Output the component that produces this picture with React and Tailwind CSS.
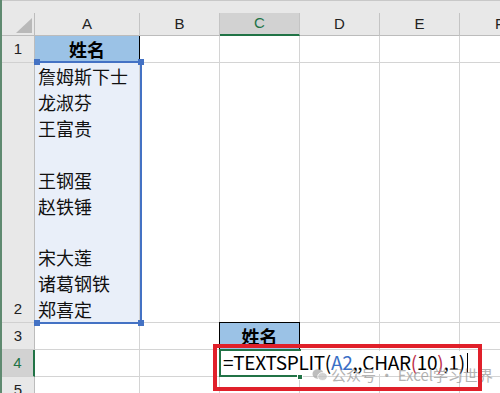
import React from 'react';

const cjk = { fontFamily: '"Noto Sans CJK SC", "Noto Sans", sans-serif' };
const hdr = { fontFamily: '"Liberation Sans", "Noto Sans", sans-serif' };

const names = ['詹姆斯下士', '龙淑芬', '王富贵', '', '王钢蛋', '赵铁锤', '', '宋大莲', '诸葛钢铁', '郑喜定'];

const RowHead = ({ num, active }) => (
    <div
        className={`w-[33px] shrink-0 flex items-end justify-center border-b border-[#d0d0d0] ${active ? 'bg-[#d2d2d2] text-[#217346] border-r-2 border-r-[#217346]' : 'bg-[#e8e8e8] text-[#222] border-r border-r-[#bcbcbc]'}`}
        style={hdr}
    >
        <span className="h-[26px] leading-[26px] text-[15px]">{num}</span>
    </div>
);

const ColHead = ({ label, w, active }) => (
    <div
        className={`${w} shrink-0 flex items-center justify-center text-[15px] border-r border-[#c4c4c4] ${active ? 'bg-[#d2d2d2] text-[#217346] border-b-2 border-b-[#217346]' : 'bg-[#e8e8e8] text-[#222] border-b border-b-[#bcbcbc]'}`}
        style={hdr}
    >
        {label}
    </div>
);

const Cell = ({ w, className = '', children }) => (
    <div className={`${w} shrink-0 border-r border-b border-[#d4d4d4] ${className}`}>{children}</div>
);

const Header = ({ children }) => (
    <div className="w-full h-full flex items-center justify-center bg-[#9bc2e6] text-[18px] font-bold text-black" style={cjk}>
        {children}
    </div>
);

export default function App() {
    return (
        <div className="relative w-[500px] h-[393px] overflow-hidden bg-white border-l-2 border-[#5f8a70]">
            {/* strip above headers */}
            <div className="h-[13px] bg-[#e8e8e8] border-t border-[#c8c8c8]" />

            {/* column headers */}
            <div className="flex h-[23px]">
                <div className="w-[33px] shrink-0 bg-[#e8e8e8] border-r border-b border-[#bcbcbc] relative">
                    <svg className="absolute left-[14px] top-[5px]" width="16" height="15" viewBox="0 0 16 15">
                        <polygon points="16,0 16,15 0,15" fill="#b9b9b9" />
                    </svg>
                </div>
                <ColHead label="A" w="w-[105px]" />
                <ColHead label="B" w="w-[80px]" />
                <ColHead label="C" w="w-[80px]" active />
                <ColHead label="D" w="w-[80px]" />
                <ColHead label="E" w="w-[80px]" />
                <ColHead label="F" w="w-[80px]" />
            </div>

            {/* row 1 */}
            <div className="flex h-[27px]">
                <RowHead num="1" />
                <Cell w="w-[105px]" className="border-r-black">
                    <Header>姓名</Header>
                </Cell>
                <Cell w="w-[80px]" />
                <Cell w="w-[80px]" />
                <Cell w="w-[80px]" />
                <Cell w="w-[80px]" />
                <Cell w="w-[80px]" />
            </div>

            {/* row 2 */}
            <div className="flex h-[260px]">
                <RowHead num="2" />
                <Cell w="w-[105px]" className="bg-[#e9eff9] flex flex-col justify-end pl-[3px]">
                    {names.map((n, i) => (
                        <div key={i} className="h-[26px] leading-[26px] text-[18px] text-[#111]" style={cjk}>{n}</div>
                    ))}
                </Cell>
                <Cell w="w-[80px]" />
                <Cell w="w-[80px]" />
                <Cell w="w-[80px]" />
                <Cell w="w-[80px]" />
                <Cell w="w-[80px]" />
            </div>

            {/* row 3 */}
            <div className="flex h-[27px]">
                <RowHead num="3" />
                <Cell w="w-[105px]" />
                <Cell w="w-[80px]" />
                <Cell w="w-[80px]" className="border border-black -mt-px -ml-px w-[81px]">
                    <Header>姓名</Header>
                </Cell>
                <Cell w="w-[80px]" />
                <Cell w="w-[80px]" />
                <Cell w="w-[80px]" />
            </div>

            {/* row 4 */}
            <div className="flex h-[27px]">
                <RowHead num="4" active />
                <Cell w="w-[105px]" />
                <Cell w="w-[80px]" />
                <Cell w="w-[80px]" className="relative">
                    <div className="absolute z-10 -left-px -top-px w-[82px] h-[28px] border-2 border-[#217346]" />
                    <div className="absolute z-10 left-[77px] top-[24px] w-[6px] h-[6px] bg-[#217346] border border-white" />
                    <div className="absolute z-20 left-[1px] top-[1px] h-[23px] w-[248px] bg-white flex items-center pl-[2px] whitespace-nowrap text-[19px] tracking-[-0.3px] text-black" style={cjk}>
                        <span>=TEXTSPLIT(</span>
                        <span className="text-[#3b6fc6]">A2</span>
                        <span>,,CHAR</span>
                        <span className="text-[#c0304a]">(</span>
                        <span>10</span>
                        <span className="text-[#c0304a]">)</span>
                        <span>,1)</span>
                        <span className="ml-[2px] w-px h-[20px] bg-black" />
                    </div>
                </Cell>
                <Cell w="w-[80px]" />
                <Cell w="w-[80px]" />
                <Cell w="w-[80px]" />
            </div>

            {/* row 5 */}
            <div className="flex h-[27px]">
                <RowHead num="5" />
                <Cell w="w-[105px]" />
                <Cell w="w-[80px]" />
                <Cell w="w-[80px]" />
                <Cell w="w-[80px]" />
                <Cell w="w-[80px]" />
                <Cell w="w-[80px]" />
            </div>

            {/* reference range A2 */}
            <div className="absolute left-[33px] top-[61px] w-[107px] h-[263px] border-t-2 border-r-2 border-b-2 border-[#4472c4]" />
            <div className="absolute left-[32px] top-[59px] w-[6px] h-[6px] bg-[#4472c4]" />
            <div className="absolute left-[136px] top-[59px] w-[6px] h-[6px] bg-[#4472c4]" />
            <div className="absolute left-[32px] top-[320px] w-[6px] h-[6px] bg-[#4472c4]" />
            <div className="absolute left-[136px] top-[320px] w-[6px] h-[6px] bg-[#4472c4]" />

            {/* watermark */}
            <div className="absolute z-30 left-[310px] top-[364px] flex items-center gap-[3px] text-[15px] text-[#9a9a9a] opacity-75" style={cjk}>
                <svg width="16" height="14" viewBox="0 0 16 14">
                    <ellipse cx="6" cy="6" rx="5.5" ry="4.8" fill="#a8a8a8" />
                    <ellipse cx="10.5" cy="8.5" rx="4.8" ry="4" fill="#c2c2c2" stroke="#fff" strokeWidth="0.8" />
                </svg>
                <span>公众号 · Excel学习世界</span>
            </div>

            {/* red annotation box */}
            <div className="absolute z-40 left-[211px] top-[344px] w-[269px] h-[47px] border-4 border-[#e0202a]" />
        </div>
    );
}
